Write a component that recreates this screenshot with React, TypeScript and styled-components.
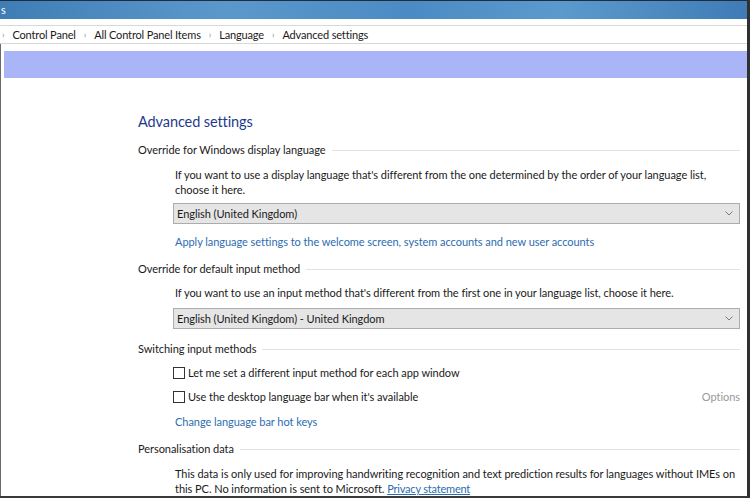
import React from 'react';
import styled, { createGlobalStyle } from 'styled-components';

const GlobalStyle = createGlobalStyle`
  html, body {
    margin: 0;
    padding: 0;
    background: #ffffff;
  }
  body {
    font-family: Lato, "Noto Sans", sans-serif;
    font-size: 11px;
    letter-spacing: -0.05px;
    color: #1a1a1a;
  }
`;

const Window = styled.div`
  width: 750px;
  height: 498px;
  box-sizing: border-box;
  border-right: 3px solid #2e3032;
  border-bottom: 2px solid #3a3a3a;
  overflow: hidden;
  display: flex;
  flex-direction: column;
  background: #fff;
`;

const TitleBar = styled.div`
  flex-shrink: 0;
  height: 18px;
  border-top: 1px solid #1f2d3d;
  background: linear-gradient(90deg, #3f7db6 0%, #5a98cc 30%, #4b8bc4 55%, #5b9acd 75%, #3f7cb6 100%);
  color: #fff;
  line-height: 18px;
  overflow: hidden;
  white-space: nowrap;
`;

const TitleText = styled.span`
  display: inline-block;
  margin-left: 1px;
`;

const Breadcrumb = styled.div`
  flex-shrink: 0;
  margin-top: 6px;
  height: 17px;
  border-top: 1px solid #d8d8d8;
  border-bottom: 1px solid #d8d8d8;
  display: flex;
  align-items: center;
  padding-left: 2px;
  font-size: 11px;
  letter-spacing: -0.15px;
  color: #1a1a1a;
  white-space: nowrap;
`;

const Crumb = styled.span`
  margin-right: 8px;
`;

const Sep = styled.span`
  color: #8a8a8a;
  font-size: 9px;
  margin-right: 8px;
`;

const Pane = styled.div`
  flex: 1;
  min-height: 0;
  overflow: hidden;
  border-left: 1px solid #6a6a6a;
  padding-top: 7px;
`;

const Band = styled.div`
  height: 27px;
  margin-left: 3px;
  background: #aab5f8;
`;

const Content = styled.div`
  padding-left: 137px;
  width: 602px;
`;

const Heading = styled.h1`
  margin: 34px 0 0 0;
  font-size: 14.5px;
  letter-spacing: -0.1px;
  font-weight: 400;
  line-height: 20px;
  color: #1f3a8c;
`;

const SectionHead = styled.div<{ $top: number }>`
  display: flex;
  align-items: center;
  gap: 6px;
  margin-top: ${(p) => p.$top}px;
  line-height: 16px;
  white-space: nowrap;
  &::after {
    content: '';
    flex: 1;
    height: 1px;
    background: #e2e2e2;
  }
`;

const Indent = styled.div`
  padding-left: 35px;
`;

const Desc = styled.p<{ $top: number }>`
  margin: ${(p) => p.$top}px 0 0 2px;
  line-height: 15px;
  white-space: nowrap;
`;

const Select = styled.div<{ $top: number }>`
  margin-top: ${(p) => p.$top}px;
  height: 19px;
  border: 1px solid #acacac;
  background: #e5e5e5;
  display: flex;
  align-items: center;
  justify-content: space-between;
  padding: 0 6px 0 3px;
`;

const Link = styled.a<{ $top: number }>`
  display: block;
  margin-top: ${(p) => p.$top}px;
  margin-left: 2px;
  line-height: 16px;
  color: #2c6cb0;
  text-decoration: none;
`;

const CheckRow = styled.label<{ $top: number }>`
  display: flex;
  align-items: center;
  margin-top: ${(p) => p.$top}px;
  line-height: 16px;
`;

const Box = styled.span`
  width: 10px;
  height: 10px;
  border: 1px solid #333;
  background: #fff;
  margin-right: 3px;
  flex-shrink: 0;
`;

const Options = styled.span`
  margin-left: auto;
  color: #9a9a9a;
`;

const Inline = styled.a`
  color: #2c6cb0;
  text-decoration: underline;
  letter-spacing: -0.2px;
`;

const Chevron = () => (
  <svg width="8" height="5" viewBox="0 0 8 5">
    <polyline points="0.5,0.5 4,4 7.5,0.5" fill="none" stroke="#7a7a7a" strokeWidth="1" />
  </svg>
);

export default function App() {
  return (
    <>
      <GlobalStyle />
      <Window>
        <TitleBar>
          <TitleText>s</TitleText>
        </TitleBar>
        <Breadcrumb>
          <Sep>›</Sep>
          <Crumb>Control Panel</Crumb>
          <Sep>›</Sep>
          <Crumb>All Control Panel Items</Crumb>
          <Sep>›</Sep>
          <Crumb>Language</Crumb>
          <Sep>›</Sep>
          <Crumb>Advanced settings</Crumb>
        </Breadcrumb>
        <Pane>
          <Band />
          <Content>
            <Heading>Advanced settings</Heading>
            <SectionHead $top={10}>Override for Windows display language</SectionHead>
            <Indent>
              <Desc $top={9}>
                If you want to use a display language that's different from the one determined by the order of your language list,
                <br />
                choose it here.
              </Desc>
              <Select $top={6}>
                <span>English (United Kingdom)</span>
                <Chevron />
              </Select>
              <Link $top={10}>Apply language settings to the welcome screen, system accounts and new user accounts</Link>
            </Indent>
            <SectionHead $top={11}>Override for default input method</SectionHead>
            <Indent>
              <Desc $top={8}>If you want to use an input method that's different from the first one in your language list, choose it here.</Desc>
              <Select $top={8}>
                <span>English (United Kingdom) - United Kingdom</span>
                <Chevron />
              </Select>
            </Indent>
            <SectionHead $top={12}>Switching input methods</SectionHead>
            <Indent>
              <CheckRow $top={8}>
                <Box />
                Let me set a different input method for each app window
              </CheckRow>
              <CheckRow $top={8}>
                <Box />
                Use the desktop language bar when it's available
                <Options>Options</Options>
              </CheckRow>
              <Link $top={9}>Change language bar hot keys</Link>
            </Indent>
            <SectionHead $top={11}>Personalisation data</SectionHead>
            <Indent>
              <Desc $top={9}>
                This data is only used for improving handwriting recognition and text prediction results for languages without IMEs on
                <br />
                this PC. No information is sent to Microsoft. <Inline>Privacy statement</Inline>
              </Desc>
            </Indent>
          </Content>
        </Pane>
      </Window>
    </>
  );
}
